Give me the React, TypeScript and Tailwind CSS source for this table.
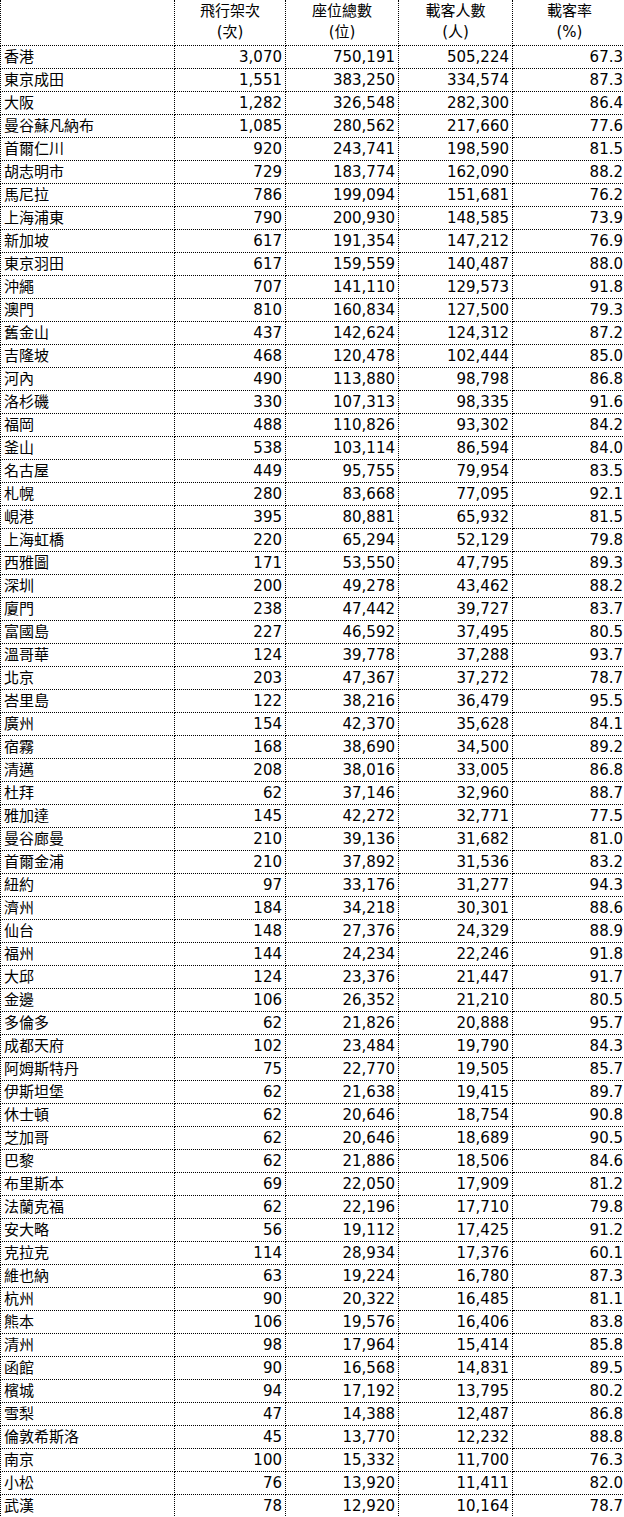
const rows: [string, string, string, string, string][] = [
  ['香港', '3,070', '750,191', '505,224', '67.3'],
  ['東京成田', '1,551', '383,250', '334,574', '87.3'],
  ['大阪', '1,282', '326,548', '282,300', '86.4'],
  ['曼谷蘇凡納布', '1,085', '280,562', '217,660', '77.6'],
  ['首爾仁川', '920', '243,741', '198,590', '81.5'],
  ['胡志明市', '729', '183,774', '162,090', '88.2'],
  ['馬尼拉', '786', '199,094', '151,681', '76.2'],
  ['上海浦東', '790', '200,930', '148,585', '73.9'],
  ['新加坡', '617', '191,354', '147,212', '76.9'],
  ['東京羽田', '617', '159,559', '140,487', '88.0'],
  ['沖繩', '707', '141,110', '129,573', '91.8'],
  ['澳門', '810', '160,834', '127,500', '79.3'],
  ['舊金山', '437', '142,624', '124,312', '87.2'],
  ['吉隆坡', '468', '120,478', '102,444', '85.0'],
  ['河內', '490', '113,880', '98,798', '86.8'],
  ['洛杉磯', '330', '107,313', '98,335', '91.6'],
  ['福岡', '488', '110,826', '93,302', '84.2'],
  ['釜山', '538', '103,114', '86,594', '84.0'],
  ['名古屋', '449', '95,755', '79,954', '83.5'],
  ['札幌', '280', '83,668', '77,095', '92.1'],
  ['峴港', '395', '80,881', '65,932', '81.5'],
  ['上海虹橋', '220', '65,294', '52,129', '79.8'],
  ['西雅圖', '171', '53,550', '47,795', '89.3'],
  ['深圳', '200', '49,278', '43,462', '88.2'],
  ['廈門', '238', '47,442', '39,727', '83.7'],
  ['富國島', '227', '46,592', '37,495', '80.5'],
  ['溫哥華', '124', '39,778', '37,288', '93.7'],
  ['北京', '203', '47,367', '37,272', '78.7'],
  ['峇里島', '122', '38,216', '36,479', '95.5'],
  ['廣州', '154', '42,370', '35,628', '84.1'],
  ['宿霧', '168', '38,690', '34,500', '89.2'],
  ['清邁', '208', '38,016', '33,005', '86.8'],
  ['杜拜', '62', '37,146', '32,960', '88.7'],
  ['雅加達', '145', '42,272', '32,771', '77.5'],
  ['曼谷廊曼', '210', '39,136', '31,682', '81.0'],
  ['首爾金浦', '210', '37,892', '31,536', '83.2'],
  ['紐約', '97', '33,176', '31,277', '94.3'],
  ['濟州', '184', '34,218', '30,301', '88.6'],
  ['仙台', '148', '27,376', '24,329', '88.9'],
  ['福州', '144', '24,234', '22,246', '91.8'],
  ['大邱', '124', '23,376', '21,447', '91.7'],
  ['金邊', '106', '26,352', '21,210', '80.5'],
  ['多倫多', '62', '21,826', '20,888', '95.7'],
  ['成都天府', '102', '23,484', '19,790', '84.3'],
  ['阿姆斯特丹', '75', '22,770', '19,505', '85.7'],
  ['伊斯坦堡', '62', '21,638', '19,415', '89.7'],
  ['休士頓', '62', '20,646', '18,754', '90.8'],
  ['芝加哥', '62', '20,646', '18,689', '90.5'],
  ['巴黎', '62', '21,886', '18,506', '84.6'],
  ['布里斯本', '69', '22,050', '17,909', '81.2'],
  ['法蘭克福', '62', '22,196', '17,710', '79.8'],
  ['安大略', '56', '19,112', '17,425', '91.2'],
  ['克拉克', '114', '28,934', '17,376', '60.1'],
  ['維也納', '63', '19,224', '16,780', '87.3'],
  ['杭州', '90', '20,322', '16,485', '81.1'],
  ['熊本', '106', '19,576', '16,406', '83.8'],
  ['清州', '98', '17,964', '15,414', '85.8'],
  ['函館', '90', '16,568', '14,831', '89.5'],
  ['檳城', '94', '17,192', '13,795', '80.2'],
  ['雪梨', '47', '14,388', '12,487', '86.8'],
  ['倫敦希斯洛', '45', '13,770', '12,232', '88.8'],
  ['南京', '100', '15,332', '11,700', '76.3'],
  ['小松', '76', '13,920', '11,411', '82.0'],
  ['武漢', '78', '12,920', '10,164', '78.7'],
];

const headers: [string, string][] = [
  ['飛行架次', '(次)'],
  ['座位總數', '(位)'],
  ['載客人數', '(人)'],
  ['載客率', '(%)'],
];

const cell = 'border border-dotted border-black px-[3px] py-px';

export default function App() {
  return (
    <div className="w-[624px] overflow-hidden bg-white text-black">
      <table
        className="w-[626px] table-fixed border-collapse text-[15px] leading-[20px]"
        style={{ fontFamily: '"DejaVu Sans", "Noto Sans CJK TC", sans-serif' }}
      >
        <colgroup>
          <col className="w-[174px]" />
          <col className="w-[111px]" />
          <col className="w-[113px]" />
          <col className="w-[114px]" />
          <col className="w-[114px]" />
        </colgroup>
        <thead>
          <tr>
            <th className="border-x border-b border-dotted border-black" />
            {headers.map(([title, unit]) => (
              <th
                key={title}
                className="border-x border-b border-dotted border-black px-[3px] pt-px pb-[2px] text-center font-normal leading-[21px]"
              >
                <div>{title}</div>
                <div>{unit}</div>
              </th>
            ))}
          </tr>
        </thead>
        <tbody>
          {rows.map(([city, flights, seats, pax, rate]) => (
            <tr key={city}>
              <td className={`${cell} text-left`}>{city}</td>
              <td className={`${cell} text-right`}>{flights}</td>
              <td className={`${cell} text-right`}>{seats}</td>
              <td className={`${cell} text-right`}>{pax}</td>
              <td className={`${cell} text-right`}>{rate}</td>
            </tr>
          ))}
        </tbody>
      </table>
    </div>
  );
}
